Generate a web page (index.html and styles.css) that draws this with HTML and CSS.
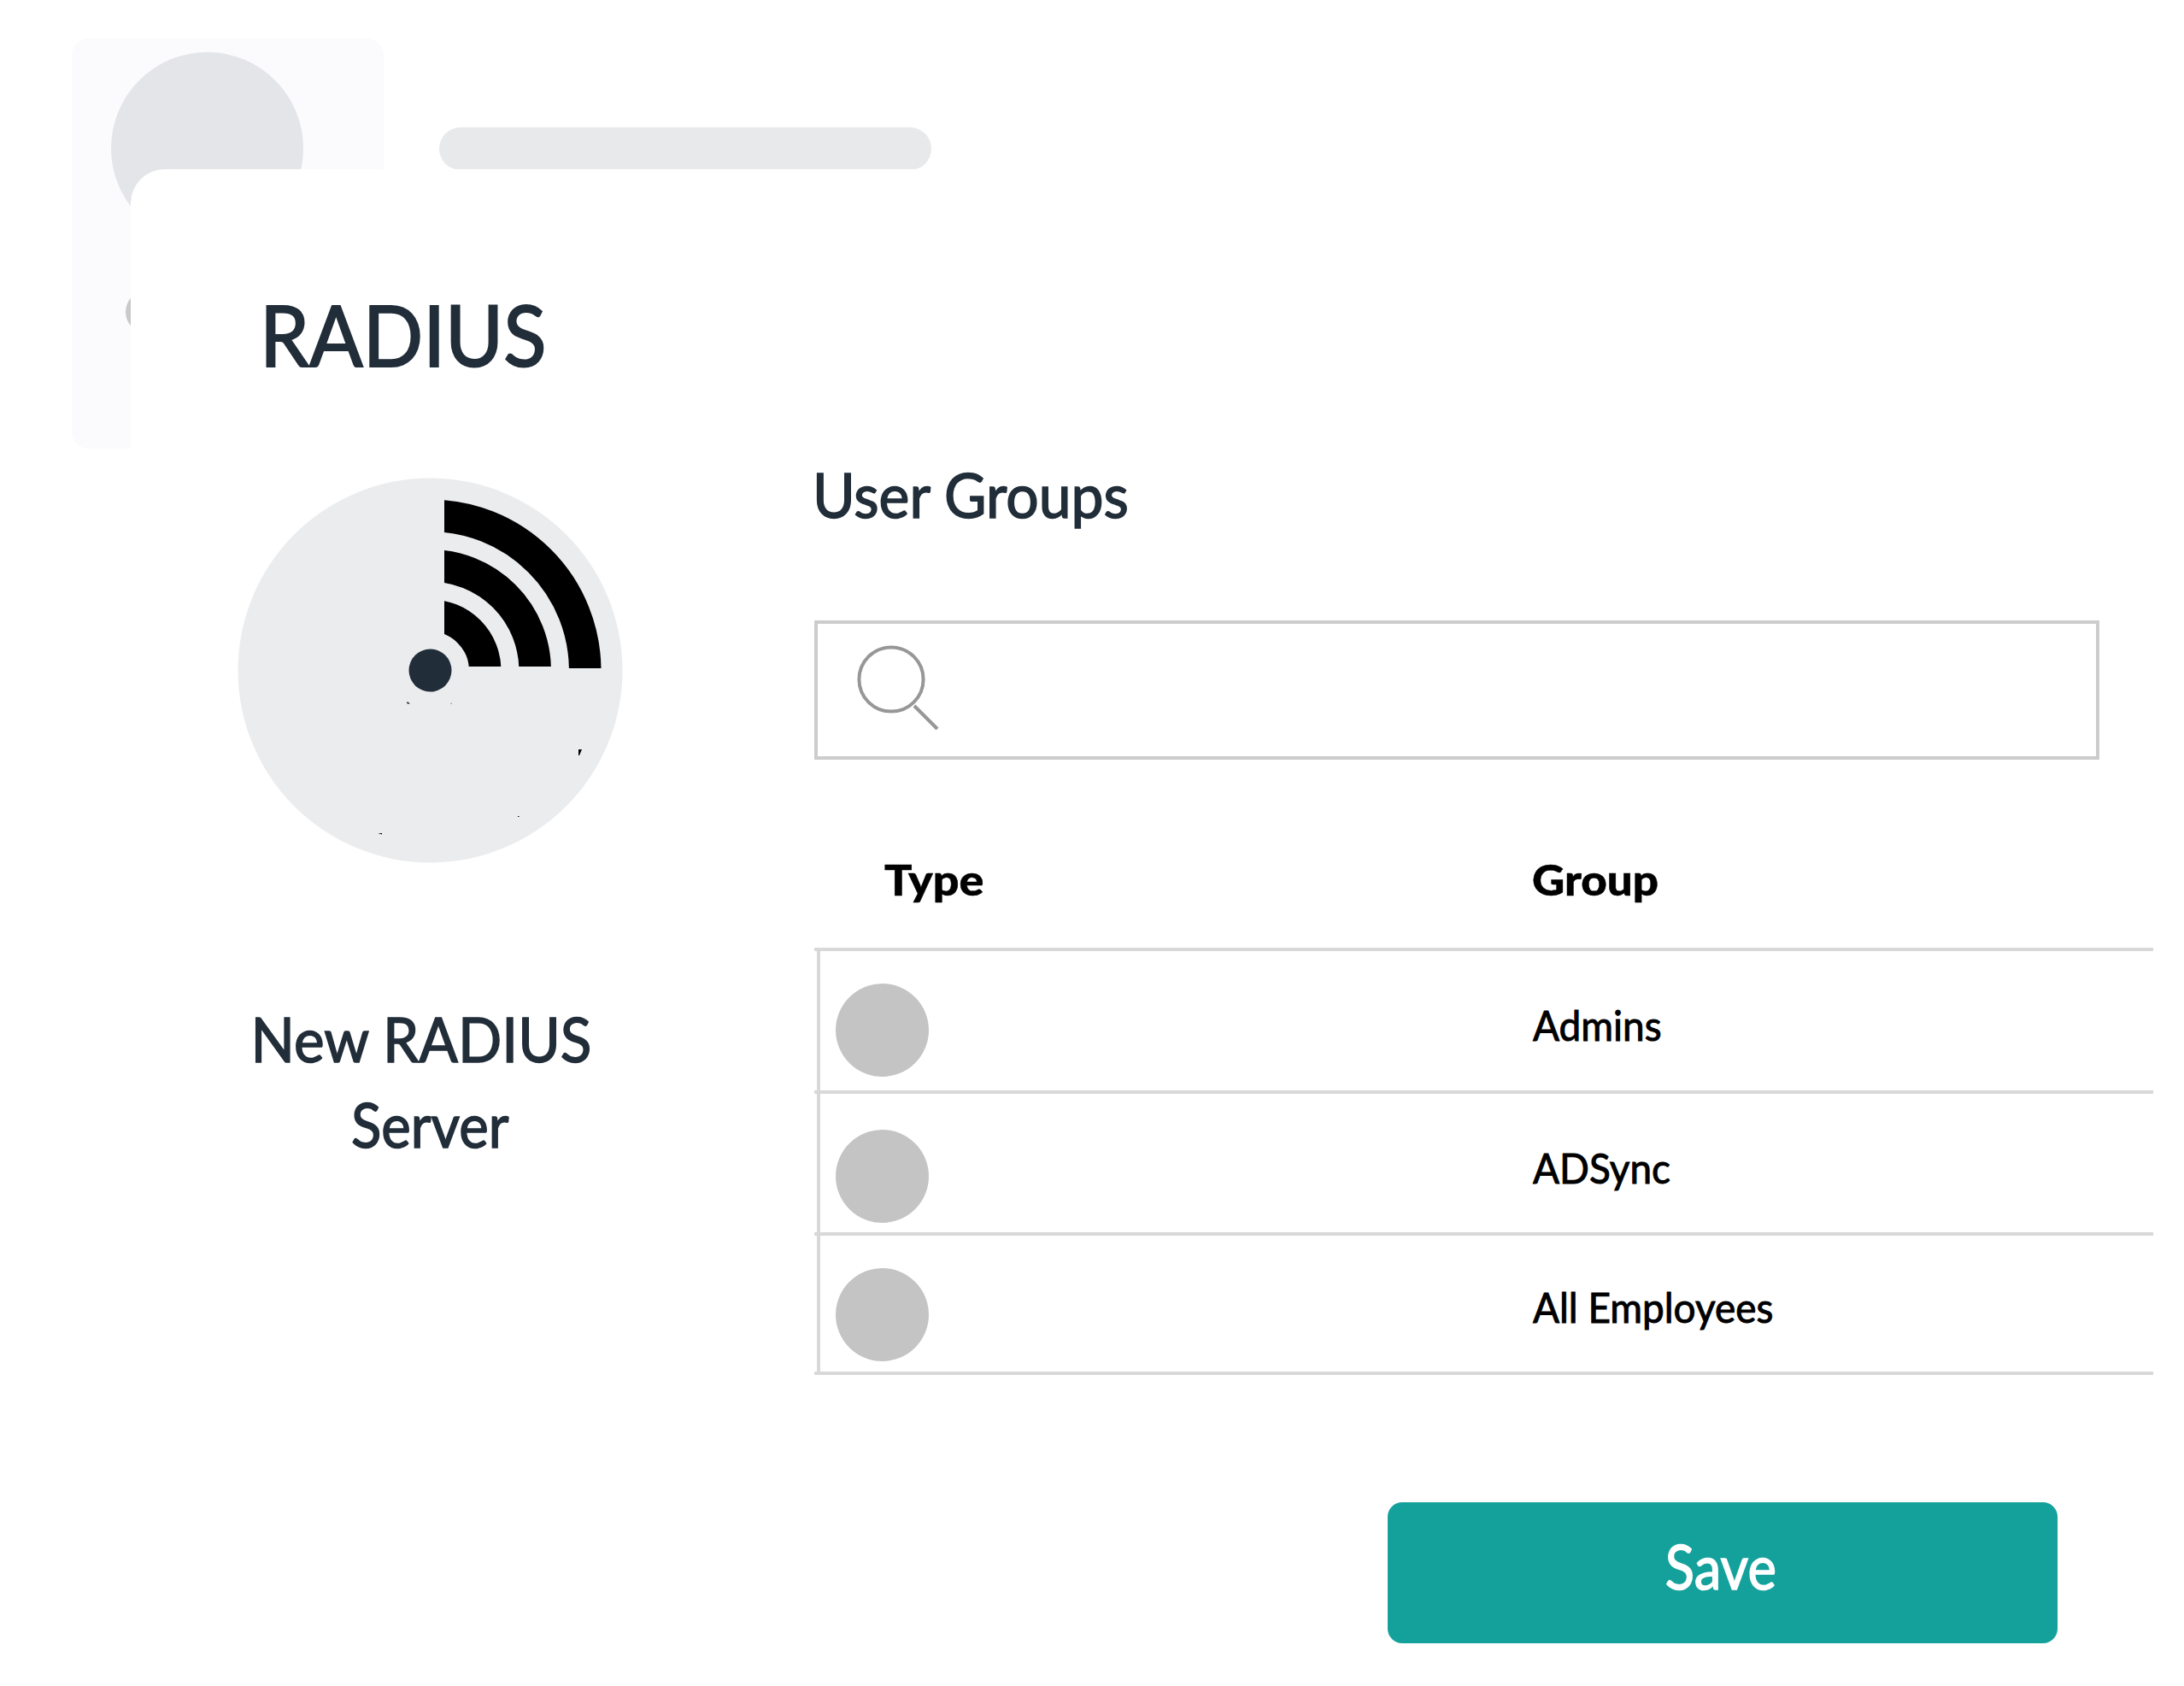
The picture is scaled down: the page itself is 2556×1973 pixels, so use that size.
FILE: index.html
```
<!DOCTYPE html>
<html lang="en">
<head>
  <meta charset="UTF-8">
  <title>RADIUS</title>
  <link rel="stylesheet" href="styles.css">
</head>
<body>

  <!-- Page behind the panel -->
  <div class="backdrop">
    <div class="profile-card">
      <div class="profile-avatar"></div>
      <div class="profile-dot"></div>
    </div>
    <div class="placeholder-bar"></div>
  </div>

  <div class="panel">
    <h1>RADIUS</h1>

    <div class="panel-content">
      <div class="server">
        <svg class="server-icon" viewBox="0 0 450 450">
          <defs>
            <clipPath id="quarter"><path d="M242 0H450V223H387V221H242Z"/></clipPath>
          </defs>
          <circle cx="225.5" cy="225.5" r="225" fill="#ebecee"/>
          <g clip-path="url(#quarter)" fill="none" stroke="#000" stroke-width="37.6">
            <circle cx="225.5" cy="225.5" r="181.2"/>
            <circle cx="225.5" cy="225.5" r="122.7"/>
            <circle cx="225.5" cy="225.5" r="64.2"/>
          </g>
          <circle cx="225.5" cy="225.5" r="25" fill="#212d38"/>
          <path d="M198.5 262l3.4 2.6h-3.4zM249 264.5l1.5-1v1zM399 318h4l-3 7h-1zM164.5 416h4.5v1.5zM328 396h1.5v1h-1.5z"/>
        </svg>
        <p class="server-name"><span class="first-line">New RADIUS</span><span class="last-line">Server</span></p>
      </div>

      <div class="groups">
        <h2>User Groups</h2>

        <div class="search-box">
          <svg class="search-icon" viewBox="0 0 84 84">
            <circle cx="40" cy="40" r="37.6"/>
            <path d="M67 71l27 27"/>
          </svg>
        </div>

        <div class="group-table">
          <div class="head">
            <span class="type">Type</span>
            <span class="group">Group</span>
          </div>
          <div class="rows">
            <div class="row">
              <span class="circle"></span>
              <span class="name">Admins</span>
            </div>
            <div class="row">
              <span class="circle"></span>
              <span class="name">ADSync</span>
            </div>
            <div class="row">
              <span class="circle"></span>
              <span class="name">All Employees</span>
            </div>
          </div>
        </div>

        <button class="save-btn"><span class="save-label">Save</span></button>
      </div>
    </div>
  </div>

</body>
</html>
```

FILE: styles.css
```
* {
  box-sizing: border-box;
}

body {
  margin: 0;
  height: 1973px;
  position: relative;
  overflow: hidden;
  background: #fff;
  font-family: Lato, "Gill Sans", sans-serif;
  font-kerning: normal;
}

h1, h2, p {
  margin: 0;
  font-weight: 400;
  color: #212d38;
  white-space: nowrap;
}

/* backdrop */
.backdrop {
  display: flex;
  align-items: flex-start;
  padding: 44.5px 0 0 83.5px;
}

.profile-card {
  width: 365px;
  height: 480px;
  padding: 16px 0 0 46.5px;
  border-radius: 20px;
  background: #fbfbfd;
}

.profile-avatar {
  width: 225px;
  height: 225px;
  border-radius: 50%;
  background: #e4e5e9;
}

.profile-dot {
  width: 50px;
  height: 50px;
  margin: 54.5px 0 0 16.5px;
  border-radius: 50%;
  background: #c9c9c9;
}

.placeholder-bar {
  width: 576px;
  height: 50px;
  margin: 104px 0 0 65.5px;
  border-radius: 25px;
  background: #e8e9eb;
}

/* panel lies over the backdrop */
.panel {
  position: absolute;
  top: 198px;
  left: 153px;
  right: 0;
  bottom: 0;
  padding: 133px 36px 0 125px;
  border-radius: 40px 0 0 0;
  background: #fff;
}

h1 {
  margin-left: 26px;
  font-size: 98px;
  line-height: 120px;
  transform: scaleX(0.945);
  transform-origin: left;
  -webkit-text-stroke: 2px #212d38;
}

.panel-content {
  display: grid;
  grid-template-columns: 450px 1fr;
  column-gap: 225px;
}

.server {
  padding-top: 108px;
}

.server-icon {
  display: block;
  width: 450px;
  height: 450px;
  overflow: visible;
}

.server-name {
  display: flex;
  flex-direction: column;
  align-items: center;
  margin-top: 157px;
  font-size: 71px;
  line-height: 100px;
  -webkit-text-stroke: 1.5px #212d38;
}

.first-line {
  margin-right: 20px;
  transform: scaleX(0.95);
}

.last-line {
  transform: scaleX(0.92);
}

.groups {
  padding-top: 83px;
}

h2 {
  margin-left: -2px;
  font-size: 71px;
  line-height: 90px;
  transform: scaleX(0.955);
  transform-origin: left;
  -webkit-text-stroke: 1.5px #212d38;
}

.search-box {
  width: 1504px;
  height: 163px;
  margin-top: 102px;
  padding: 25px 0 0 46px;
  border: 4px solid #ccc;
}

.search-icon {
  display: block;
  width: 84px;
  height: 84px;
  overflow: visible;
  fill: none;
  stroke: #979797;
  stroke-width: 4;
}

.head {
  display: grid;
  grid-template-columns: 840px 1fr;
  height: 220px;
  padding-top: 110px;
  font-size: 49px;
  font-weight: 900;
  line-height: 60px;
  -webkit-text-stroke: 0.5px #000;
}

.type {
  margin-left: 82px;
  transform: scaleX(1.1);
  transform-origin: left;
}

.group {
  transform: scaleX(1.08);
  transform-origin: left;
}

.rows {
  position: relative;
}

/* vertical rule, slightly inset from the row lines */
.rows::before {
  content: "";
  position: absolute;
  top: 0;
  bottom: 0;
  left: 3px;
  width: 4px;
  background: #d8d8d8;
}

.row {
  display: grid;
  grid-template-columns: 816px 1fr;
  height: 167px;
  padding-left: 25px;
  border-top: 4px solid #d8d8d8;
  font-size: 49px;
  line-height: 60px;
}

.row:nth-child(2) {
  height: 166px;
}

.row:nth-child(3) {
  border-bottom: 4px solid #d8d8d8;
}

.circle {
  width: 109px;
  height: 109px;
  margin-top: 37.5px;
  border-radius: 50%;
  background: #c4c4c4;
}

.row:nth-child(2) .circle {
  margin-top: 41.5px;
}

.name {
  height: 60px;
  margin-top: 56px;
  transform: scaleX(0.937);
  transform-origin: left;
  -webkit-text-stroke: 1px #000;
}

.row:nth-child(3) .name {
  margin-top: 53px;
}

.save-btn {
  display: block;
  width: 784px;
  height: 165px;
  margin: 149px 0 0 671px;
  padding: 0 5px 18px 0;
  border: none;
  border-radius: 17px;
  background: #15a19b;
  color: #fff;
  font-family: inherit;
  font-size: 72px;
}

.save-label {
  display: inline-block;
  transform: scaleX(0.88);
  -webkit-text-stroke: 1.5px #fff;
}
```
